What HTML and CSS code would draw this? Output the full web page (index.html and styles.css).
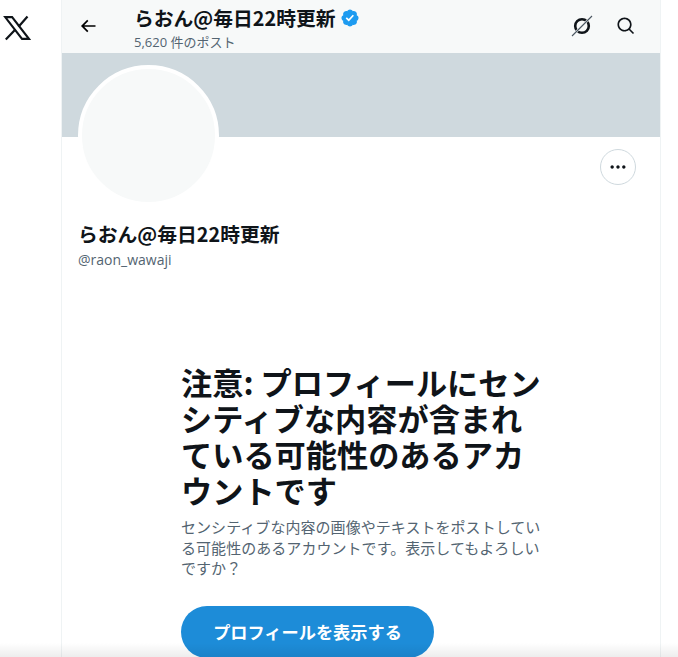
FILE: index.html
```html
<!DOCTYPE html>
<html lang="ja">
<head>
  <meta charset="UTF-8" />
  <title>らおん@毎日22時更新</title>
  <link rel="stylesheet" href="styles.css">
</head>
<body>
  <div class="page">
    <aside class="side">
      <a class="logo" href="#">
        <svg viewBox="0 0 24 24" width="28" height="28" fill="none" stroke="#0f1419" stroke-width="1.8"><path d="M1.9 2.7h5.9l14.4 18.6h-5.9z"/><path d="M21 2.2l-7.7 8.7M10.6 13.3L2.4 21.8" stroke-width="1.9"/></svg>
      </a>
    </aside>
    <main class="column">
      <header class="topbar">
        <a class="back" href="#">
          <svg viewBox="0 0 24 24" width="20" height="20"><path d="M7.414 13l5.043 5.04-1.414 1.42L3.586 12l7.457-7.46 1.414 1.42L7.414 11H21v2H7.414z"/></svg>
        </a>
        <div class="topbar-title">
          <h2>らおん@毎日22時更新
            <svg class="verified" viewBox="0 0 22 22" width="20" height="20"><path fill="#1d9bf0" d="M20.396 11c-.018-.646-.215-1.275-.57-1.816-.354-.54-.852-.972-1.438-1.246.223-.607.27-1.264.14-1.897-.131-.634-.437-1.218-.882-1.687-.47-.445-1.053-.75-1.687-.882-.633-.13-1.29-.083-1.897.14-.273-.587-.704-1.086-1.245-1.44S11.647 1.62 11 1.604c-.646.017-1.273.213-1.813.568s-.969.854-1.24 1.44c-.608-.223-1.267-.272-1.902-.14-.635.13-1.22.436-1.69.882-.445.47-.749 1.055-.878 1.688-.13.633-.08 1.29.144 1.896-.587.274-1.087.705-1.443 1.245-.356.54-.555 1.17-.574 1.817.02.647.218 1.276.574 1.817.356.54.856.972 1.443 1.245-.224.606-.274 1.263-.144 1.896.13.634.433 1.218.877 1.688.47.443 1.054.747 1.687.878.633.132 1.29.084 1.897-.136.274.586.705 1.084 1.246 1.439.54.354 1.17.551 1.816.569.647-.016 1.276-.213 1.817-.567s.972-.854 1.245-1.44c.604.239 1.266.296 1.903.164.636-.132 1.22-.447 1.68-.907.46-.46.776-1.044.908-1.681s.075-1.299-.165-1.903c.586-.274 1.084-.705 1.439-1.246.354-.54.551-1.17.569-1.816z"/><path fill="#fff" d="M9.662 14.85l-3.429-3.428 1.293-1.302 2.072 2.072 4.4-4.794 1.347 1.246z"/></svg>
          </h2>
          <p>5,620 件のポスト</p>
        </div>
        <div class="topbar-icons">
          <svg viewBox="0 0 24 24" width="24" height="24" fill="none"><circle cx="12" cy="12" r="6.8" stroke="#0f1419" stroke-width="2.6"/><path stroke="#f7f9f9" stroke-width="2.4" d="M18 6L6 18"/><path stroke="#4a5661" stroke-width="1.1" d="M22 2L2 22"/></svg>
          <svg viewBox="0 0 24 24" width="20" height="20"><path fill="#0f1419" d="M10.25 3.75c-3.59 0-6.5 2.91-6.5 6.5s2.91 6.5 6.5 6.5c1.795 0 3.419-.726 4.596-1.904 1.178-1.177 1.904-2.801 1.904-4.596 0-3.59-2.91-6.5-6.5-6.5zm-8.5 6.5c0-4.694 3.806-8.5 8.5-8.5s8.5 3.806 8.5 8.5c0 1.986-.682 3.815-1.824 5.262l4.781 4.781-1.414 1.414-4.781-4.781c-1.447 1.142-3.276 1.824-5.262 1.824-4.694 0-8.5-3.806-8.5-8.5z"/></svg>
        </div>
      </header>

      <div class="banner"></div>

      <section class="profile">
        <div class="profile-top">
          <div class="avatar"></div>
          <button class="more">
            <svg viewBox="0 0 24 24" width="20" height="20"><path fill="#0f1419" d="M3 12c0-1.1.9-2 2-2s2 .9 2 2-.9 2-2 2-2-.9-2-2zm9 2c1.1 0 2-.9 2-2s-.9-2-2-2-2 .9-2 2 .9 2 2 2zm7 0c1.1 0 2-.9 2-2s-.9-2-2-2-2 .9-2 2 .9 2 2 2z"/></svg>
          </button>
        </div>
        <h1 class="name">らおん@毎日22時更新</h1>
        <p class="handle">@raon_wawaji</p>
      </section>

      <section class="warning">
        <h3>注意: プロフィールにセンシティブな内容が含まれている可能性のあるアカウントです</h3>
        <p>センシティブな内容の画像やテキストをポストしている可能性のあるアカウントです。表示してもよろしいですか？</p>
        <button class="show">プロフィールを表示する</button>
      </section>
    </main>
  </div>
  <div class="bottom-fade"></div>
</body>
</html>
```

FILE: styles.css
```css
html, body {
  margin: 0;
  height: 657px;
  overflow: hidden;
}
body {
  font-family: "Noto Sans CJK JP", "Open Sans", sans-serif;
  background: #fff;
  color: #0f1419;
}
.page {
  display: flex;
  height: 657px;
}
.side {
  width: 61px;
  flex: none;
}
.logo {
  display: block;
  padding: 14px 0 0 3px;
  line-height: 0;
}
.column {
  width: 598px;
  flex: none;
  border-left: 1px solid #eff3f4;
  border-right: 1px solid #eff3f4;
}
.topbar {
  height: 53px;
  background: #f7f9f9;
  display: flex;
  align-items: flex-start;
}
.back {
  margin: 16px 0 0 16px;
  line-height: 0;
}
.topbar-title {
  margin-left: 36px;
}
.topbar-title h2 {
  margin: 5px 0 0;
  font-size: 19.8px;
  line-height: 26px;
  font-weight: 700;
  display: flex;
  align-items: center;
  gap: 4px;
}
.topbar-title p {
  margin: 2px 0 0;
  font-size: 13px;
  line-height: 18px;
  color: #536471;
  font-family: "Open Sans", "Noto Sans CJK JP", sans-serif;
}
.topbar-icons {
  margin: 14px 24px 0 auto;
  display: flex;
  align-items: center;
  gap: 22px;
  line-height: 0;
}
.banner {
  height: 84px;
  background: #cfd9de;
}
.profile {
  padding: 0 16px;
}
.profile-top {
  display: flex;
  justify-content: space-between;
  align-items: flex-start;
  height: 80px;
}
.avatar {
  width: 133px;
  height: 133px;
  margin-top: -72px;
  border: 4px solid #fff;
  border-radius: 50%;
  background: #f7f9f9;
}
.more {
  width: 36px;
  height: 36px;
  margin: 12px 8px 0 0;
  padding: 0;
  background: #fff;
  border: 1px solid #cfd9de;
  border-radius: 50%;
  display: flex;
  align-items: center;
  justify-content: center;
}
.name {
  margin: 4px 0 0;
  font-size: 19.8px;
  line-height: 26px;
  font-weight: 700;
}
.handle {
  margin: 3px 0 0;
  font-size: 14px;
  line-height: 20px;
  color: #536471;
  font-family: "Open Sans", sans-serif;
}
.warning {
  width: 360px;
  margin: 94px auto 0;
}
.warning h3 {
  margin: 0;
  font-size: 31.2px;
  line-height: 36px;
  font-weight: 700;
}
.warning p {
  margin: 9px 0 0;
  font-size: 15px;
  line-height: 20.5px;
  letter-spacing: .05px;
  color: #536471;
}
.show {
  display: block;
  margin-top: 27px;
  width: 253px;
  height: 52px;
  border: none;
  border-radius: 26px;
  background: #1d8cd8;
  color: #fff;
  font-family: inherit;
  font-size: 17.2px;
  font-weight: 700;
}
.bottom-fade {
  position: absolute;
  left: 0;
  right: 0;
  bottom: 0;
  height: 14px;
  background: linear-gradient(rgba(0, 0, 0, 0), rgba(0, 0, 0, .07));
}
```
